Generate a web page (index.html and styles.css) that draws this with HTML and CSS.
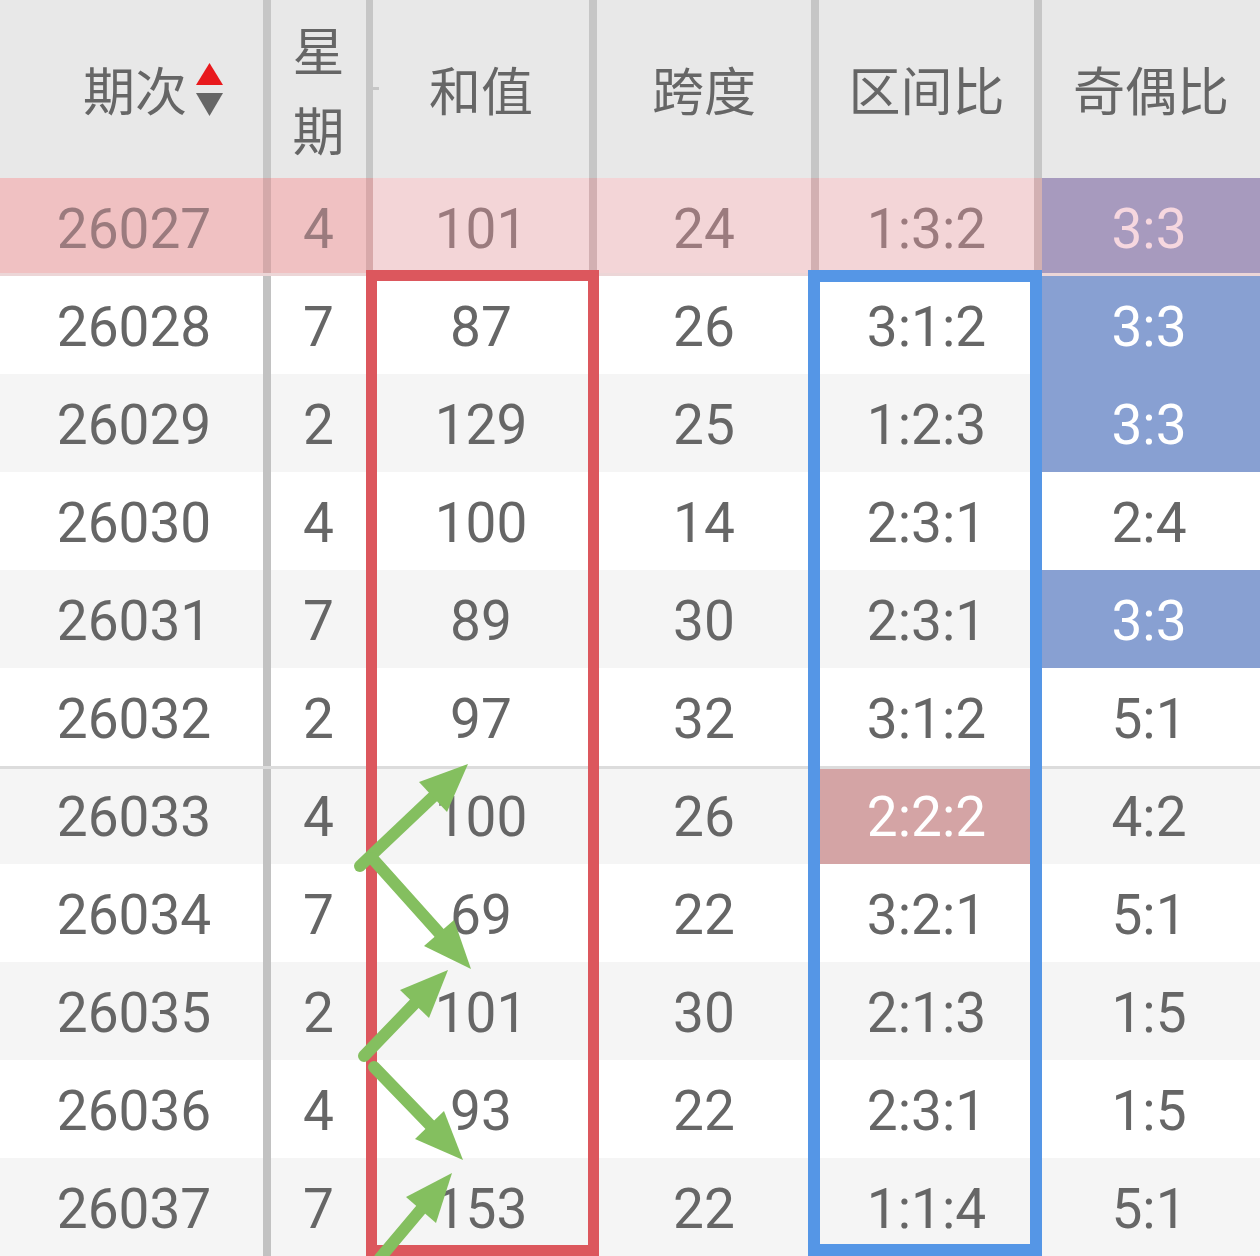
FILE: index.html
```html
<!DOCTYPE html>
<html lang="zh-CN">
<head>
<meta charset="utf-8">
<title>走势表</title>
<link rel="stylesheet" href="styles.css">
</head>
<body>
<div class="page">
  <div class="table">
    <div class="row head">
      <div class="cell c1 hd-sort"><span class="hd-text">期次</span>
        <svg class="sort" width="27" height="53" viewBox="0 0 27 53"><polygon points="13.5,0 27,22 0,22" fill="#e8191c"/><polygon points="0,30 27,30 13.5,53" fill="#666"/></svg>
      </div>
      <div class="cell c2 hd-week">星期</div>
      <div class="cell c3">和值</div>
      <div class="cell c4">跨度</div>
      <div class="cell c5">区间比</div>
      <div class="cell c6">奇偶比</div>
    </div>
    <div class="row first">
      <div class="cell c1">26027</div>
      <div class="cell c2">4</div>
      <div class="cell c3">101</div>
      <div class="cell c4">24</div>
      <div class="cell c5">1:3:2</div>
      <div class="cell c6 purple">3:3</div>
    </div>
    <div class="row">
      <div class="cell c1">26028</div><div class="cell c2">7</div><div class="cell c3">87</div><div class="cell c4">26</div><div class="cell c5">3:1:2</div><div class="cell c6 blue">3:3</div>
    </div>
    <div class="row alt">
      <div class="cell c1">26029</div><div class="cell c2">2</div><div class="cell c3">129</div><div class="cell c4">25</div><div class="cell c5">1:2:3</div><div class="cell c6 blue">3:3</div>
    </div>
    <div class="row">
      <div class="cell c1">26030</div><div class="cell c2">4</div><div class="cell c3">100</div><div class="cell c4">14</div><div class="cell c5">2:3:1</div><div class="cell c6">2:4</div>
    </div>
    <div class="row alt">
      <div class="cell c1">26031</div><div class="cell c2">7</div><div class="cell c3">89</div><div class="cell c4">30</div><div class="cell c5">2:3:1</div><div class="cell c6 blue">3:3</div>
    </div>
    <div class="row">
      <div class="cell c1">26032</div><div class="cell c2">2</div><div class="cell c3">97</div><div class="cell c4">32</div><div class="cell c5">3:1:2</div><div class="cell c6">5:1</div>
    </div>
    <div class="row alt divider">
      <div class="cell c1">26033</div><div class="cell c2">4</div><div class="cell c3">100</div><div class="cell c4">26</div><div class="cell c5 rose">2:2:2</div><div class="cell c6">4:2</div>
    </div>
    <div class="row">
      <div class="cell c1">26034</div><div class="cell c2">7</div><div class="cell c3">69</div><div class="cell c4">22</div><div class="cell c5">3:2:1</div><div class="cell c6">5:1</div>
    </div>
    <div class="row alt">
      <div class="cell c1">26035</div><div class="cell c2">2</div><div class="cell c3">101</div><div class="cell c4">30</div><div class="cell c5">2:1:3</div><div class="cell c6">1:5</div>
    </div>
    <div class="row">
      <div class="cell c1">26036</div><div class="cell c2">4</div><div class="cell c3">93</div><div class="cell c4">22</div><div class="cell c5">2:3:1</div><div class="cell c6">1:5</div>
    </div>
    <div class="row alt">
      <div class="cell c1">26037</div><div class="cell c2">7</div><div class="cell c3">153</div><div class="cell c4">22</div><div class="cell c5">1:1:4</div><div class="cell c6">5:1</div>
    </div>
  </div>

  <div class="tick"></div>
  <div class="box box-red"></div>
  <div class="box box-blue"></div>

  <svg class="arrows" width="1260" height="1256" viewBox="0 0 1260 1256">
    <g stroke="#84bf5f" stroke-width="12" stroke-linecap="round" fill="none">
      <line x1="360" y1="866" x2="436" y2="794"/>
      <line x1="372" y1="858" x2="441" y2="935"/>
      <line x1="364" y1="1056" x2="417" y2="1001"/>
      <line x1="374" y1="1067" x2="432" y2="1127"/>
      <line x1="380" y1="1258" x2="423" y2="1207"/>
    </g>
    <g fill="#84bf5f">
      <polygon points="468,764 447,812 419,782"/>
      <polygon points="471,969 454,920 424,946"/>
      <polygon points="448,970 429,1018 400,990"/>
      <polygon points="463,1160 444,1111 415,1139"/>
      <polygon points="452,1173 436,1223 406,1197"/>
    </g>
  </svg>
</div>
</body>
</html>
```

FILE: styles.css
```css
html, body {
  margin: 0;
  padding: 0;
  background: #fff;
}

.page {
  position: relative;
  width: 1260px;
  height: 1256px;
  overflow: hidden;
  font-family: Roboto, "Noto Sans CJK SC", sans-serif;
  color: #666;
}

.table {
  display: flex;
  flex-direction: column;
}

.row {
  display: grid;
  grid-template-columns: 271px 102px 224px 222px 223px 218px;
  height: 98px;
  background: #fff;
}

.row.alt {
  background: #f5f5f5;
}

.cell {
  box-sizing: border-box;
  display: flex;
  align-items: center;
  justify-content: center;
  font-size: 55px;
  font-weight: 400;
  line-height: 1;
  padding-top: 4px;
}

.row .c1 {
  border-right: 8px solid #c2c2c2;
  padding-left: 5px;
}

.row .c2 { padding-right: 7px; }
.row .c3,
.row .c4,
.row .c5 { padding-right: 8px; }
.row .c6 { padding-right: 4px; }

/* header */
.row.head {
  height: 178px;
  background: #e8e8e8;
}

.row.head .cell {
  font-family: "Noto Sans CJK SC", sans-serif;
  font-size: 52px;
  color: #666;
  padding-top: 0;
  padding-right: 0;
}

.row.head .c1 { border-right: 8px solid #c6c6c6; }
.row.head .c2 { border-right: 7px solid #c6c6c6; }
.row.head .c3,
.row.head .c4,
.row.head .c5 { border-right: 8px solid #c6c6c6; }

.row.head .hd-sort {
  justify-content: flex-end;
  padding-right: 40px;
  gap: 9px;
}

.hd-text {
  display: block;
}

.sort {
  display: block;
  margin-top: 0;
}

.row.head .hd-week {
  padding: 0 20px;
  line-height: 80px;
  text-align: center;
  word-break: break-all;
}

/* first (highlighted) row */
.row.first {
  height: 98px;
  border-bottom: 3px solid #ecd6d7;
  box-sizing: border-box;
  background: #f3d5d7;
  color: #9b7b7e;
}

.row.first .cell {
  padding-top: 7px;
}

.row.first .c1 {
  background: #f0c1c2;
  border-right: 8px solid #d4a9aa;
}

.row.first .c2 {
  background: #f0c1c2;
  border-right: 7px solid #d8a9aa;
  padding-right: 0;
}

.row.first .c3,
.row.first .c4,
.row.first .c5 {
  border-right: 8px solid #d2b0b2;
  padding-right: 0;
}

.purple {
  background: #a79abe;
  color: #f6d7df;
}

.blue {
  background: #88a0d2;
  color: #fff;
}

.rose {
  background: #d4a4a5;
  color: #fff;
}

.row.divider {
  border-top: 3px solid #dcdcdc;
  height: 98px;
  box-sizing: border-box;
}

.row.divider .cell {
  padding-top: 1px;
}

/* overlay frames */
.tick {
  position: absolute;
  left: 373px;
  top: 87px;
  width: 6px;
  height: 3px;
  background: #c6c6c6;
}

.box {
  position: absolute;
  box-sizing: border-box;
  top: 270px;
  bottom: 0;
  pointer-events: none;
}

.box-red {
  left: 366px;
  width: 233px;
  border: 11px solid #dc575d;
}

.box-blue {
  left: 808px;
  width: 234px;
  border: 12px solid #5596e6;
}

.arrows {
  position: absolute;
  left: 0;
  top: 0;
  pointer-events: none;
}
```
